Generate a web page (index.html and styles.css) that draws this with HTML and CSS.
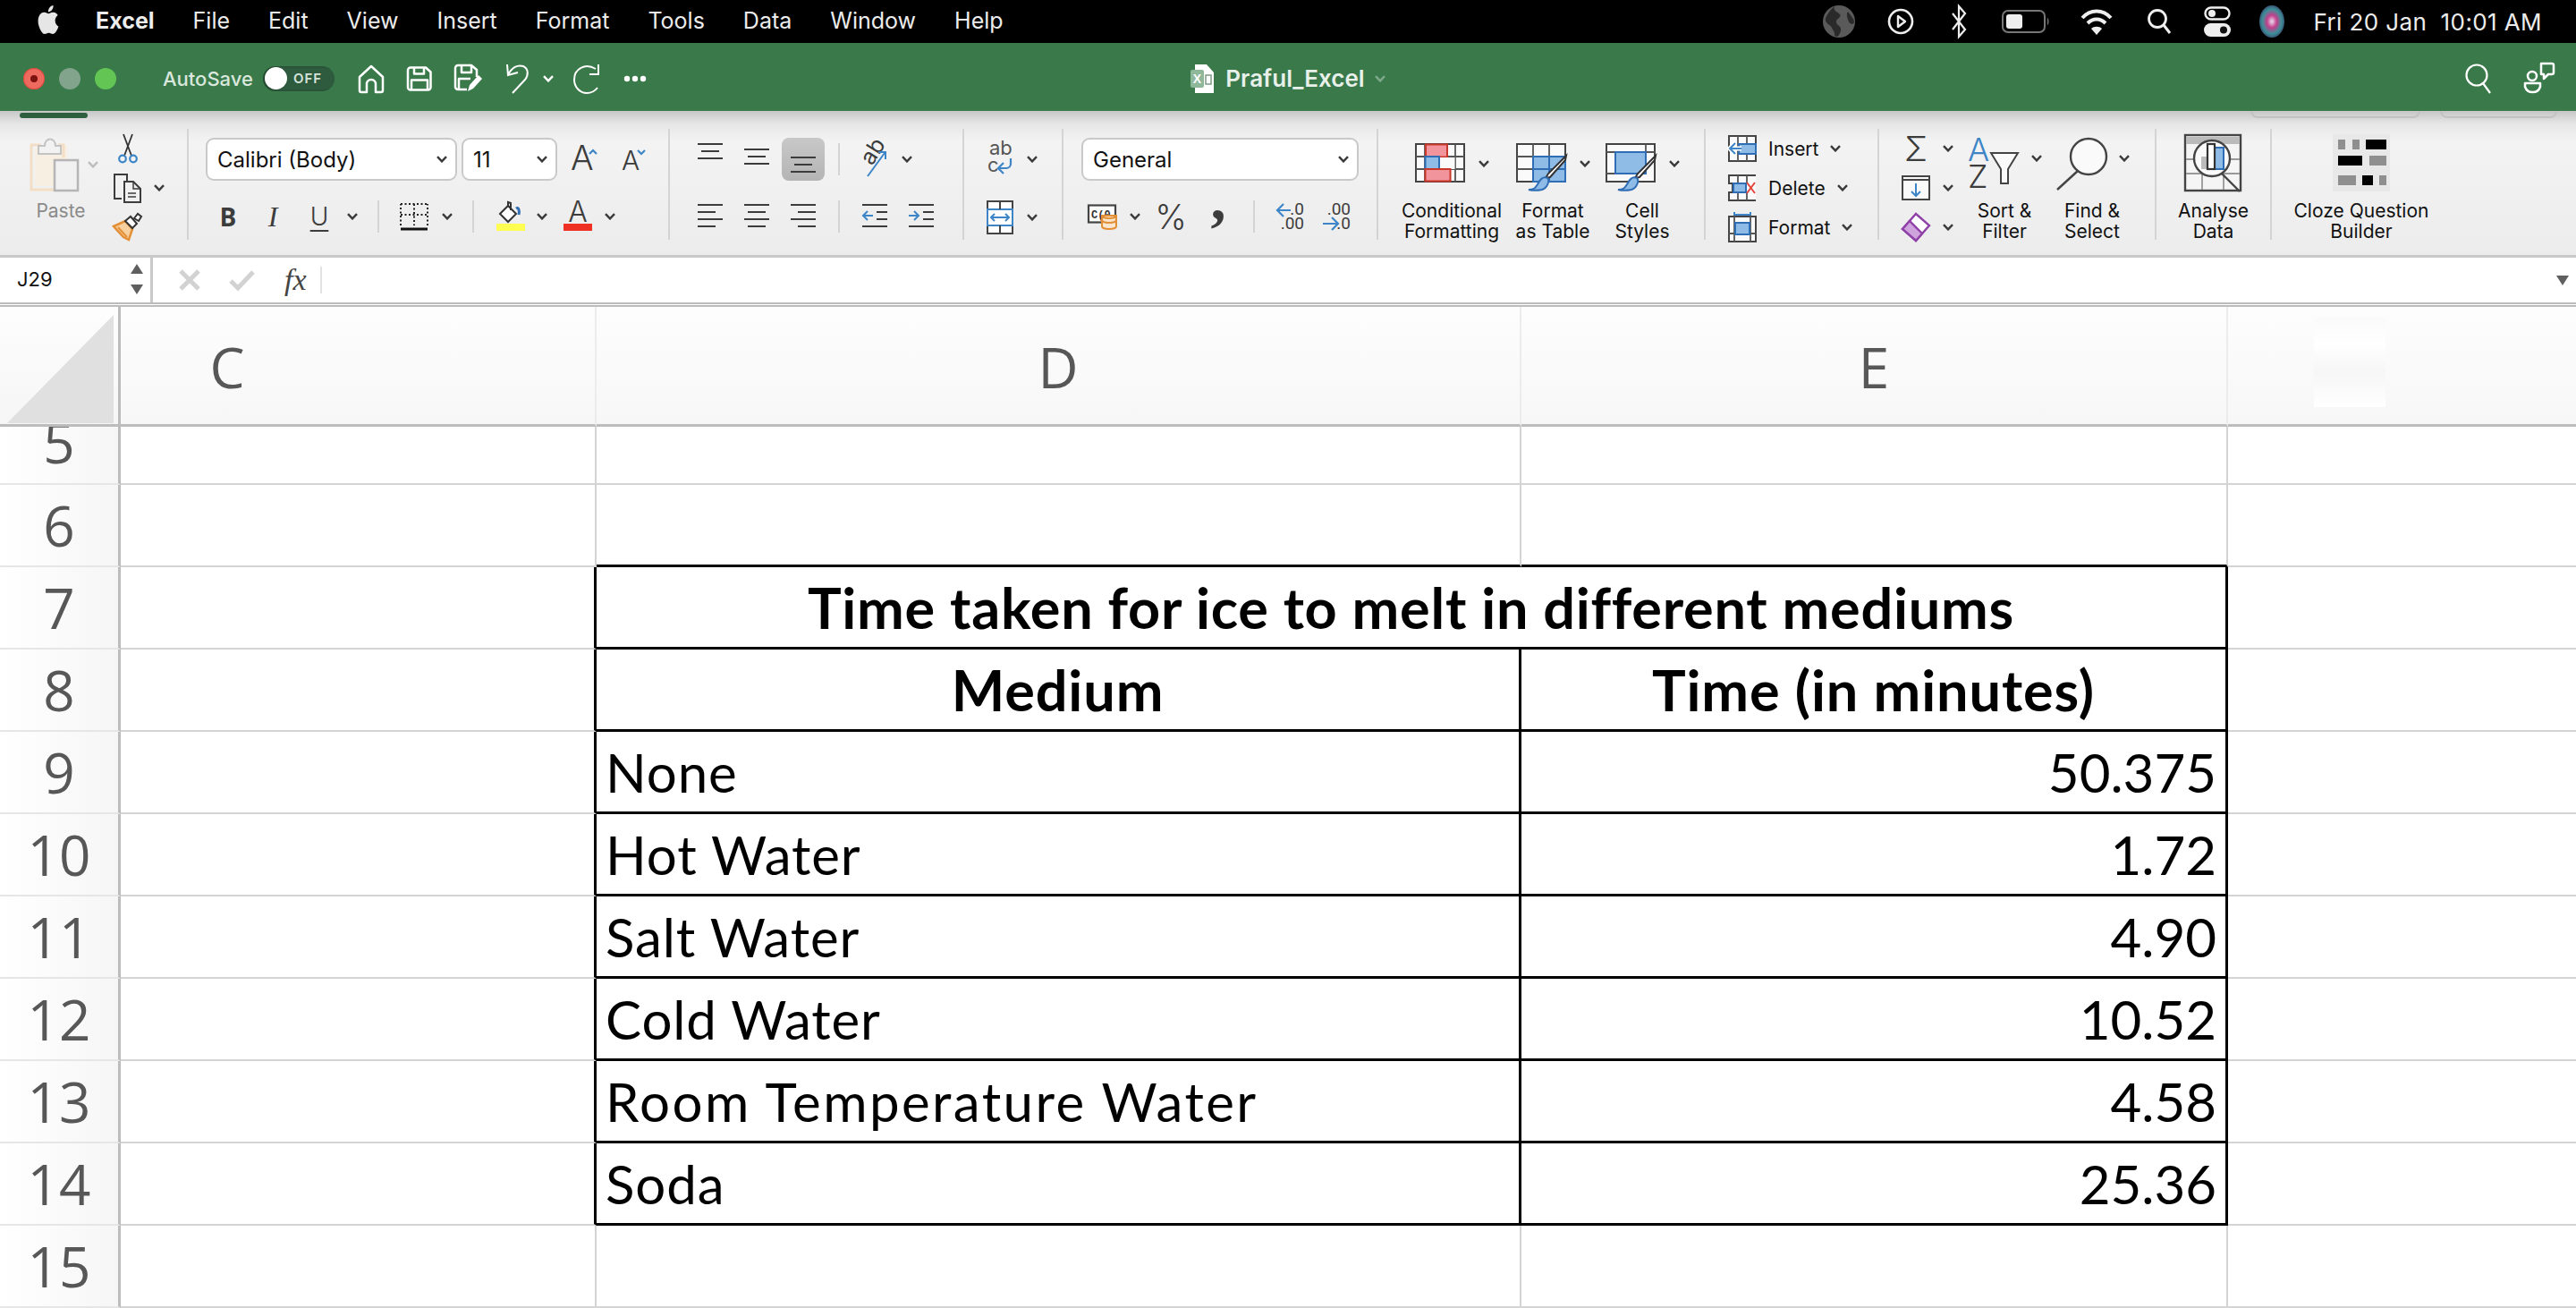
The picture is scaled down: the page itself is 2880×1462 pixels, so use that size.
FILE: index.html
```html
<!DOCTYPE html>
<html lang="en">
<head>
<meta charset="utf-8">
<title>Praful_Excel</title>
<link rel="stylesheet" href="styles.css">
</head>
<body>
<svg class="defs" width="0" height="0">
  <symbol id="chev" viewBox="0 0 12 8"><path d="M1 1.2 6 6.4 11 1.2" fill="none" stroke="currentColor" stroke-width="2.4"/></symbol>
</svg>

<header class="menubar">
  <svg class="apple" viewBox="0 0 24 24" width="28" height="32" preserveAspectRatio="none"><path fill="#e6e6e6" d="M12.152 6.896c-.948 0-2.415-1.078-3.96-1.04-2.04.027-3.91 1.183-4.961 3.014-2.117 3.675-.546 9.103 1.519 12.09 1.013 1.454 2.208 3.09 3.792 3.039 1.52-.065 2.09-.987 3.935-.987 1.831 0 2.35.987 3.96.948 1.637-.026 2.676-1.48 3.676-2.948 1.156-1.688 1.636-3.325 1.662-3.415-.039-.013-3.182-1.221-3.22-4.857-.026-3.04 2.48-4.494 2.597-4.559-1.429-2.09-3.623-2.324-4.39-2.376-2-.156-3.675 1.09-4.61 1.09zM15.53 3.83c.843-1.012 1.4-2.427 1.245-3.83-1.207.052-2.662.805-3.532 1.818-.78.896-1.454 2.338-1.273 3.714 1.338.104 2.715-.688 3.559-1.701"/></svg>
  <nav class="menus">
    <span class="menu-app">Excel</span><span>File</span><span>Edit</span><span>View</span><span>Insert</span><span>Format</span><span>Tools</span><span>Data</span><span>Window</span><span>Help</span>
  </nav>
  <div class="status">
    <svg width="38" height="38" viewBox="0 0 38 38"><circle cx="19" cy="19" r="18" fill="#5a5a5a"/><path d="M14 2c-2 5 3 6 6 9s-5 5-4 9 6 4 5 9-3 6-4 7l-3-1c1-4-2-6-3-9s-6-4-7-8 6-13 10-16zM29 8c2 3 7 8 7 12-2 4-6 1-7-3s-2-6 0-9z" fill="#2a2a2a"/></svg>
    <svg width="30" height="30" viewBox="0 0 30 30"><circle cx="15" cy="15" r="13" fill="none" stroke="#eee" stroke-width="2.6"/><path d="M12 9l8 6-8 6z" fill="none" stroke="#eee" stroke-width="2.4" stroke-linejoin="round"/></svg>
    <svg width="20" height="38" viewBox="0 0 20 38"><path d="M3 10l14 18-7 8V2l7 8L3 28" fill="none" stroke="#eee" stroke-width="2.2"/></svg>
    <svg width="54" height="26" viewBox="0 0 54 26"><rect x="1" y="1" width="47" height="24" rx="6" fill="none" stroke="#777" stroke-width="2"/><rect x="5" y="5" width="18" height="16" rx="3" fill="#eee"/><path d="M51 9c2 1 2 7 0 8z" fill="#777"/></svg>
    <svg width="36" height="30" viewBox="0 0 36 30"><path d="M2 11c9-10 23-10 32 0M8 17c6-6 14-6 20 0M13 22" fill="none" stroke="#eee" stroke-width="4"/><path d="M18 30l-6-7c3-3 9-3 12 0z" fill="#eee"/></svg>
    <svg width="28" height="30" viewBox="0 0 28 30"><circle cx="12" cy="12" r="9.5" fill="none" stroke="#eee" stroke-width="2.8"/><path d="M19 19l7 9" stroke="#eee" stroke-width="3"/></svg>
    <svg width="30" height="34" viewBox="0 0 30 34"><rect x="1.5" y="1.5" width="27" height="13" rx="6.5" fill="none" stroke="#eee" stroke-width="2.4"/><circle cx="9" cy="8" r="4" fill="#eee"/><rect x="0" y="19" width="30" height="15" rx="7.5" fill="#eee"/><circle cx="22" cy="26.500" r="4" fill="#111"/></svg>
    <svg width="28" height="36" viewBox="0 0 28 36"><defs><radialGradient id="siri" cx="50%" cy="50%" r="55%"><stop offset="0" stop-color="#e9e0f2"/><stop offset=".35" stop-color="#c43f8c"/><stop offset=".7" stop-color="#3b8f97"/><stop offset="1" stop-color="#3a3f6b"/></radialGradient></defs><ellipse cx="14" cy="18" rx="14" ry="18" fill="url(#siri)"/></svg>
    <span class="clock">Fri 20 Jan&nbsp; 10:01 AM</span>
  </div>
</header>

<section class="titlebar">
  <div class="tb-left">
    <div class="lights"><i class="light red"><b></b></i><i class="light gray"></i><i class="light green"></i></div>
    <span class="autosave">AutoSave</span>
    <span class="toggle"><i></i><em>OFF</em></span>
    <div class="qat">
      <svg width="30" height="32" viewBox="0 0 30 32"><path class="w" d="M2 14 15 2l13 12v15a2 2 0 0 1-2 2h-6V22a5 5 0 0 0-10 0v9H4a2 2 0 0 1-2-2z"/></svg>
      <svg width="28" height="28" viewBox="0 0 28 28"><path class="w" d="M4 1.500h17l5.500 5v17a3 3 0 0 1-3 3H4a3 3 0 0 1-3-3v-19a3 3 0 0 1 3-3zM8 1.500v7h11v-7M5 26.500v-11h18v11"/></svg>
      <svg width="32" height="32" viewBox="0 0 32 32"><path class="w" d="M14 28H4a3 3 0 0 1-3-3V4a3 3 0 0 1 3-3h15l6 5v8M8 1v8h11V1M5 28V16h13"/><path d="M15 30l2-7 10-11 4 4-10 11z" fill="#fff"/></svg>
      <svg width="28" height="34" viewBox="0 0 28 34"><path class="w2" d="M2 1l1 12 11-3M3 13C7 4 14 1 20 3c6 3 6 10 2 15L8 33"/></svg>
      <svg class="chev white" width="12" height="8"><use href="#chev"/></svg>
      <svg width="34" height="34" viewBox="0 0 34 34"><path class="w2" d="M26 6C14-1 2 6 2 18c0 8 6 15 14 15 5 0 9-2 12-6M29 1v11H19"/></svg>
      <svg width="26" height="8" viewBox="0 0 26 8"><circle cx="4" cy="4" r="3.200" fill="#fff"/><circle cx="13" cy="4" r="3.200" fill="#fff"/><circle cx="22" cy="4" r="3.200" fill="#fff"/></svg>
    </div>
  </div>
  <div class="tb-center">
    <svg width="28" height="32" viewBox="0 0 28 32"><path d="M5 0h13l8 9v23H5z" fill="#fff"/><rect x="0" y="6" width="15" height="20" rx="2" fill="#8fb79a"/><text class="doc-x" x="7.500" y="21">X</text><path d="M17 12h6v10h-6z" fill="none" stroke="#7d9c86" stroke-width="1.500"/></svg>
    <span class="docname">Praful_Excel</span>
    <svg class="chev faded" width="12" height="8"><use href="#chev"/></svg>
  </div>
  <div class="tb-right">
    <svg width="30" height="34" viewBox="0 0 30 34"><circle cx="13" cy="13" r="11.500" fill="none" stroke="#fff" stroke-width="2.200"/><path d="M20 22l8 11" stroke="#fff" stroke-width="2.200"/></svg>
    <svg width="34" height="38" viewBox="0 0 34 38"><path class="w" d="M19 2h12a2 2 0 0 1 2 2v8a2 2 0 0 1-2 2h-4l-5 5v-5h-3z"/><circle cx="9" cy="16" r="5" class="w"/><path class="w" d="M1 24h17v4a9 9 0 0 1-17 0z"/></svg>
  </div>
  <i class="pill"></i>
  <i class="tabedge a"></i><i class="tabedge b"></i>
</section>

<section class="ribbon">
  <div class="group g-paste">
    <div class="paste-col">
      <div class="paste-top">
        <svg width="54" height="60" viewBox="0 0 54 60"><path d="M12 8H1v50h26" fill="none" stroke="#f3ddc5" stroke-width="3"/><path d="M5 12v42h22V24h14V8h-3" fill="#f8efe3"/><path d="M31 8h6v14" fill="none" stroke="#f3ddc5" stroke-width="3"/><path d="M9 18V9h7c0-10 12-10 12 0h6v9z" fill="#f2f2f2" stroke="#c4c4c4" stroke-width="2"/><rect x="27" y="25" width="26" height="34" fill="#f1f1f1" stroke="#b5b5b5" stroke-width="2.500"/></svg>
        <svg class="chev dim" width="12" height="8"><use href="#chev"/></svg>
      </div>
      <span class="paste-label">Paste</span>
    </div>
    <div class="clip-col">
      <svg class="scissors" width="22" height="34" viewBox="0 0 22 34"><path d="M7 25 16 1M15 25 6 1" stroke="#333" stroke-width="1.800" fill="none"/><circle cx="5" cy="28.500" r="3.800" fill="none" stroke="#3d85c6" stroke-width="2.200"/><circle cx="17" cy="28.500" r="3.800" fill="none" stroke="#3d85c6" stroke-width="2.200"/></svg>
      <div class="copy-row">
        <svg width="34" height="34" viewBox="0 0 34 34"><path class="ln" d="M10 29H2V2h14v7"/><path class="ln" d="M13 10h10l8 8v15H13z"/><path d="M23 10v8h8M17 23h9M17 27h9" class="ln thin"/></svg>
        <svg class="chev" width="12" height="8"><use href="#chev"/></svg>
      </div>
      <svg width="34" height="32" viewBox="0 0 34 32"><path d="M1 16 14 10l8 9-4 12-6-3z" fill="#f8cf9e" stroke="#e28f36" stroke-width="2.500"/><path d="M6 17l10 11" stroke="#e28f36" stroke-width="2"/><path d="M14 10l6-5 7 8-5 5z" fill="#fff" stroke="#333" stroke-width="2"/><path d="M24 7l4-5 4 3-3 5z" fill="#fff" stroke="#333" stroke-width="2"/></svg>
    </div>
  </div>

  <div class="group g-font">
    <div class="row r-font1">
      <div class="select s-font">Calibri (Body)<svg class="chev" width="12" height="8"><use href="#chev"/></svg></div>
      <div class="select s-size">11<svg class="chev" width="12" height="8"><use href="#chev"/></svg></div>
      <svg width="32" height="30" viewBox="0 0 32 30"><text class="glyph ga-big" x="0" y="27">A</text><path d="M21 9l4-4 4 4" fill="none" stroke="#3d85c6" stroke-width="2.200"/></svg>
      <svg width="28" height="30" viewBox="0 0 28 30"><text class="glyph ga-small" x="0" y="27">A</text><path d="M18 5l4 4 4-4" fill="none" stroke="#3d85c6" stroke-width="2.200"/></svg>
    </div>
    <div class="row r-font2">
      <span class="tb tb-b">B</span>
      <span class="tb tb-i">I</span>
      <span class="tb tb-u">U</span>
      <svg class="chev" width="12" height="8"><use href="#chev"/></svg>
      <i class="vsep"></i>
      <svg width="32" height="32" viewBox="0 0 32 32"><path d="M1 2h30M1 14h30M1 26V2M31 26V2M16 2v24" stroke="#222" stroke-width="2" stroke-dasharray="2 2.500" fill="none"/><path d="M1 30h30" stroke="#111" stroke-width="3"/></svg>
      <svg class="chev" width="12" height="8"><use href="#chev"/></svg>
      <i class="vsep"></i>
      <svg class="fill-icon" width="34" height="34" viewBox="0 0 34 34"><path d="M5 14l9-9 9 9-9 9z" fill="#fff" stroke="#333" stroke-width="2"/><path d="M14 5V1l3 1v8" fill="none" stroke="#333" stroke-width="2"/><path d="M23 8c3-2 4 3 3 7" fill="none" stroke="#2f6db5" stroke-width="3"/><rect x="1" y="25" width="32" height="8" fill="#fdfd52"/></svg>
      <svg class="chev" width="12" height="8"><use href="#chev"/></svg>
      <svg width="34" height="34" viewBox="0 0 34 34"><text class="glyph ga-color" x="17" y="23">A</text><rect x="1" y="25" width="32" height="8" fill="#ee3124"/></svg>
      <svg class="chev" width="12" height="8"><use href="#chev"/></svg>
    </div>
  </div>

  <div class="group g-align">
    <div class="row r-align1">
      <svg width="28" height="36" viewBox="0 0 28 36"><path class="ln" d="M0 1h28M4 9h20M0 17h28"/></svg>
      <svg width="28" height="36" viewBox="0 0 28 36"><path class="ln" d="M0 7h28M4 15h20M0 23h28"/></svg>
      <span class="hl"><svg width="28" height="20" viewBox="0 0 28 20"><path class="ln" d="M0 1h28M4 9h20M0 17h28"/></svg></span>
      <i class="vsep"></i>
      <svg width="30" height="36" viewBox="0 0 30 36"><text class="orient" transform="translate(13 26) rotate(-58)" x="0" y="0">ab</text><path d="M8 37 27 11M20 10h8v8" fill="none" stroke="#3d85c6" stroke-width="2"/></svg>
      <svg class="chev" width="12" height="8"><use href="#chev"/></svg>
    </div>
    <div class="row r-align2">
      <svg width="28" height="28" viewBox="0 0 28 28"><path class="ln" d="M0 1h28M0 9h20M0 17h28M0 25h20"/></svg>
      <svg width="28" height="28" viewBox="0 0 28 28"><path class="ln" d="M0 1h28M4 9h20M0 17h28M4 25h20"/></svg>
      <svg width="28" height="28" viewBox="0 0 28 28"><path class="ln" d="M0 1h28M8 9h20M0 17h28M8 25h20"/></svg>
      <i class="vsep"></i>
      <svg width="28" height="28" viewBox="0 0 28 28"><path class="ln" d="M0 1h28M16 9h12M16 17h12M0 25h28"/><path d="M12 13H1M6 8l-5 5 5 5" fill="none" stroke="#3d85c6" stroke-width="2"/></svg>
      <svg width="28" height="28" viewBox="0 0 28 28"><path class="ln" d="M0 1h28M16 9h12M16 17h12M0 25h28"/><path d="M0 13h11M6 8l5 5-5 5" fill="none" stroke="#3d85c6" stroke-width="2"/></svg>
    </div>
  </div>

  <div class="group g-wrap">
    <div class="row r-wrap">
      <svg width="30" height="40" viewBox="0 0 30 40"><text class="wraptx" x="3" y="15">ab</text><text class="wraptx" x="1" y="34">c</text><path d="M27 19v6a5 5 0 0 1-5 5h-8M19 24l-6 6 6 6" fill="none" stroke="#3d85c6" stroke-width="2.200"/></svg>
      <svg class="chev" width="12" height="8"><use href="#chev"/></svg>
    </div>
    <div class="row r-wrap">
      <svg width="30" height="38" viewBox="0 0 30 38"><rect x="1" y="1" width="28" height="36" fill="#fff" stroke="#444" stroke-width="2"/><rect x="1" y="10" width="28" height="18" fill="#fff" stroke="#3d85c6" stroke-width="2"/><path d="M15 1v9M15 28v9" stroke="#444" stroke-width="2"/><path d="M5 19h20M9 15l-4 4 4 4M21 15l4 4-4 4" fill="none" stroke="#3d85c6" stroke-width="2"/></svg>
      <svg class="chev" width="12" height="8"><use href="#chev"/></svg>
    </div>
  </div>

  <div class="group g-num">
    <div class="row r-num1">
      <div class="select s-num">General<svg class="chev" width="12" height="8"><use href="#chev"/></svg></div>
    </div>
    <div class="row r-num2">
      <svg width="34" height="28" viewBox="0 0 34 28"><rect x="1" y="1.500" width="30" height="19" fill="#fff" stroke="#444" stroke-width="2.200"/><text class="acc" x="4" y="16">C(0</text><path d="M16 13h16v12a8 3 0 0 1-16 0z" fill="#fbe7cf" stroke="#e28f36" stroke-width="2"/><path d="M16 18a8 3 0 0 0 16 0M16 13a8 3 0 0 0 16 0" fill="none" stroke="#e28f36" stroke-width="2"/></svg>
      <svg class="chev" width="12" height="8"><use href="#chev"/></svg>
      <span class="pct">%</span>
      <span class="comma">,</span>
      <i class="vsep"></i>
      <svg width="32" height="34" viewBox="0 0 32 34"><path d="M17 10H2M9 3 2 10l7 7" fill="none" stroke="#3d85c6" stroke-width="2.200"/><text class="dec" x="32" y="15" text-anchor="end">.0</text><text class="dec" x="32" y="31" text-anchor="end">.00</text></svg>
      <svg width="32" height="34" viewBox="0 0 32 34"><text class="dec" x="32" y="15" text-anchor="end">.00</text><text class="dec" x="32" y="31" text-anchor="end">.0</text><path d="M1 25h17M11 18l7 7-7 7" fill="none" stroke="#3d85c6" stroke-width="2.200"/></svg>
    </div>
  </div>

  <div class="group g-styles">
    <div class="big">
      <div class="big-top">
        <svg width="56" height="44" viewBox="0 0 56 44"><rect x="1" y="1" width="54" height="42" fill="#fafafa" stroke="#444" stroke-width="2"/><path d="M1 15h54M1 29h54M11 1v42M36 1v42M45 1v42" stroke="#555" stroke-width="1.800"/><rect x="12" y="1.500" width="24" height="14" fill="#f2949b" stroke="#c9362a" stroke-width="2"/><rect x="27.500" y="16" width="17" height="13" fill="#fafafa"/><rect x="11.500" y="15" width="15.500" height="14" fill="#8fbce6" stroke="#2f6db5" stroke-width="2"/><rect x="11.500" y="29" width="28" height="13.500" fill="#f2949b" stroke="#c9362a" stroke-width="2"/></svg>
        <svg class="chev" width="12" height="8"><use href="#chev"/></svg>
      </div>
      <span class="label">Conditional<br>Formatting</span>
    </div>
    <div class="big">
      <div class="big-top">
        <svg width="56" height="54" viewBox="0 0 56 54"><rect x="1" y="1" width="54" height="42" fill="#fafafa" stroke="#444" stroke-width="2"/><path d="M1 15h54M1 29h54M19 1v42M37 1v42" stroke="#555" stroke-width="1.800"/><rect x="19" y="15" width="36" height="28" fill="#8fbce6" stroke="#2f6db5" stroke-width="2"/><path d="M19 29h36M37 15v28" stroke="#2f6db5" stroke-width="2"/><path d="M56 14 36 34l-3 5 5-1 17-19z" fill="#fff" stroke="#333" stroke-width="2"/><path d="M14 52c7 0 8-3 10-6 2-4 6-10 11-7 3 3 0 11-6 13-5 1-11 1-15 0z" fill="#8fbce6" stroke="#2f6db5" stroke-width="2"/></svg>
        <svg class="chev" width="12" height="8"><use href="#chev"/></svg>
      </div>
      <span class="label">Format<br>as Table</span>
    </div>
    <div class="big">
      <div class="big-top">
        <svg width="56" height="54" viewBox="0 0 56 54"><rect x="1" y="1" width="54" height="42" fill="#fafafa" stroke="#444" stroke-width="2"/><path d="M1 10h10M45 10h10M1 34h10M45 1v10" stroke="#555" stroke-width="1.800"/><rect x="11" y="10" width="34" height="24" fill="#8fbce6" stroke="#2f6db5" stroke-width="2"/><path d="M56 14 36 34l-3 5 5-1 17-19z" fill="#fff" stroke="#333" stroke-width="2"/><path d="M14 52c7 0 8-3 10-6 2-4 6-10 11-7 3 3 0 11-6 13-5 1-11 1-15 0z" fill="#8fbce6" stroke="#2f6db5" stroke-width="2"/></svg>
        <svg class="chev" width="12" height="8"><use href="#chev"/></svg>
      </div>
      <span class="label">Cell<br>Styles</span>
    </div>
  </div>

  <div class="group g-cells">
    <div class="cellrow">
      <svg width="32" height="30" viewBox="0 0 32 30"><rect x="1" y="1" width="30" height="28" fill="#fafafa" stroke="#444" stroke-width="2"/><path d="M11 1v28M21 1v28" stroke="#555" stroke-width="1.800"/><rect x="12" y="10" width="19" height="11" fill="#8fbce6" stroke="#2f6db5" stroke-width="2"/><path d="M15 15H2M8 8l-6 7 6 7" fill="none" stroke="#fff" stroke-width="5"/><path d="M15 15H2M8 9l-6 6 6 6" fill="none" stroke="#3d85c6" stroke-width="2"/></svg>
      <span class="label">Insert</span><svg class="chev" width="12" height="8"><use href="#chev"/></svg>
    </div>
    <div class="cellrow">
      <svg width="32" height="30" viewBox="0 0 32 30"><path d="M31 1H1v9h4v10H1v9h30" fill="#fafafa" stroke="#444" stroke-width="2"/><path d="M11 1v9M21 1v9M11 20v9M21 20v9" stroke="#555" stroke-width="1.800"/><rect x="6" y="10" width="14" height="10" fill="#8fbce6" stroke="#2f6db5" stroke-width="2"/><path d="M21 9l9 12M30 9l-9 12" stroke="#e2443a" stroke-width="2"/></svg>
      <span class="label">Delete</span><svg class="chev" width="12" height="8"><use href="#chev"/></svg>
    </div>
    <div class="cellrow">
      <svg width="32" height="34" viewBox="0 0 32 34"><path d="M7 3h18M7 0v6M25 0v6" stroke="#3d85c6" stroke-width="2"/><rect x="1" y="5" width="30" height="28" fill="#fafafa" stroke="#444" stroke-width="2"/><path d="M7 5v28M25 5v28M1 24h30" stroke="#555" stroke-width="1.800"/><rect x="8" y="12" width="16" height="13" fill="#8fbce6" stroke="#2f6db5" stroke-width="2"/></svg>
      <span class="label">Format</span><svg class="chev" width="12" height="8"><use href="#chev"/></svg>
    </div>
  </div>

  <div class="group g-edit">
    <div class="edit-col">
      <div class="editrow">
        <span class="sigma">&Sigma;</span>
        <svg class="chev" width="12" height="8"><use href="#chev"/></svg>
      </div>
      <div class="editrow">
        <svg width="32" height="28" viewBox="0 0 32 28"><rect x="1" y="1" width="30" height="26" fill="#fafafa" stroke="#444" stroke-width="2"/><path d="M1 5h30" stroke="#444" stroke-width="2"/><path d="M16 9v14M11 18l5 5 5-5" fill="none" stroke="#3d85c6" stroke-width="2"/></svg>
        <svg class="chev" width="12" height="8"><use href="#chev"/></svg>
      </div>
      <div class="editrow">
        <svg width="32" height="32" viewBox="0 0 32 32"><path d="M16 1 31 14 16 31 1 18z" fill="#fff" stroke="#8f41a8" stroke-width="2.400"/><path d="M1 18 9 9l14 14-7 8z" fill="#cfa3dd" stroke="#8f41a8" stroke-width="2.400"/></svg>
        <svg class="chev" width="12" height="8"><use href="#chev"/></svg>
      </div>
    </div>
    <div class="big">
      <div class="big-top sort-top">
        <svg width="58" height="60" viewBox="0 0 58 60"><text class="az blue" x="0" y="27">A</text><text class="az" x="0" y="57">Z</text><path d="M26 18h30L45 36v16h-8V36z" fill="#fafafa" stroke="#444" stroke-width="2"/></svg>
        <svg class="chev" width="12" height="8"><use href="#chev"/></svg>
      </div>
      <span class="label">Sort &amp;<br>Filter</span>
    </div>
    <div class="big">
      <div class="big-top sort-top">
        <svg width="58" height="60" viewBox="0 0 58 60"><ellipse cx="37" cy="22" rx="20" ry="20" fill="#fafafa" stroke="#444" stroke-width="2.400"/><path d="M25 38 2 59" stroke="#444" stroke-width="2.400"/></svg>
        <svg class="chev" width="12" height="8"><use href="#chev"/></svg>
      </div>
      <span class="label">Find &amp;<br>Select</span>
    </div>
  </div>

  <div class="group g-analyse">
    <div class="big">
      <div class="big-top tall">
        <svg width="64" height="64" viewBox="0 0 64 64"><rect x="1" y="1" width="62" height="62" fill="#f5f5f5" stroke="#444" stroke-width="2.400"/><rect x="2" y="3" width="60" height="8" fill="#bbb"/><path d="M2 28h60M2 44h60M20 44v18M44 44v18" stroke="#999" stroke-width="1.800"/><circle cx="31" cy="27" r="20" fill="#fafafa" stroke="#444" stroke-width="2.400"/><rect x="19" y="25" width="10" height="14" fill="#bbb"/><rect x="34" y="15" width="10" height="24" fill="#8fbce6" stroke="#2f6db5" stroke-width="2"/><rect x="26" y="11" width="8" height="28" fill="#fff" stroke="#333" stroke-width="2.200"/><path d="M42 44 62 64" stroke="#444" stroke-width="2.400"/></svg>
      </div>
      <span class="label">Analyse<br>Data</span>
    </div>
  </div>

  <div class="group g-cloze">
    <div class="big">
      <div class="big-top tall">
        <svg width="64" height="64" viewBox="0 0 64 64"><rect width="64" height="64" fill="#e8e8e8"/><g fill="#8f8f8f"><rect x="6" y="6" width="8" height="11"/><rect x="22" y="6" width="8" height="11"/><rect x="41" y="24" width="19" height="11"/><rect x="6" y="46" width="20" height="11"/><rect x="52" y="46" width="8" height="11"/></g><g fill="#000"><rect x="37" y="6" width="23" height="11"/><rect x="6" y="24" width="27" height="11"/><rect x="33" y="46" width="12" height="11"/></g></svg>
      </div>
      <span class="label">Cloze Question<br>Builder</span>
    </div>
  </div>
</section>

<section class="formula">
  <div class="namebox">
    <span>J29</span>
    <div class="stepper"><i class="tri up"></i><i class="tri down"></i></div>
  </div>
  <div class="fx-tools">
    <svg width="24" height="24" viewBox="0 0 24 24"><path d="M2 2l20 20M22 2 2 22" stroke="#d2d2d2" stroke-width="5"/></svg>
    <svg width="30" height="24" viewBox="0 0 30 24"><path d="M2 13l8 8L27 3" fill="none" stroke="#d2d2d2" stroke-width="5"/></svg>
    <span class="fx">fx</span>
    <i class="fx-sep"></i>
  </div>
  <div class="fx-input"></div>
  <i class="tri down big-tri"></i>
</section>

<main class="sheet">
  <div class="corner"><svg width="120" height="121" viewBox="0 0 120 121"><path d="M0 121 119 0v121z" fill="#e0e0e0"/></svg></div>
  <div class="colhead col-c">C</div>
  <div class="colhead">D</div>
  <div class="colhead">E</div>
  <div class="colhead-rest"><i class="ghost"></i></div>

  <div class="rowhead rowhead-cut"><span>5</span></div><div class="cell"></div><div class="cell"></div><div class="cell"></div><div class="cell rest"></div>
  <div class="rowhead"><span>6</span></div><div class="cell"></div><div class="cell edge-b"></div><div class="cell edge-b"></div><div class="cell rest"></div>

  <div class="rowhead"><span>7</span></div><div class="cell edge-r"></div><div class="cell tcell title">Time taken for ice to melt in different mediums</div><div class="cell rest"></div>
  <div class="rowhead"><span>8</span></div><div class="cell edge-r"></div><div class="cell tcell head">Medium</div><div class="cell tcell head">Time (in minutes)</div><div class="cell rest"></div>
  <div class="rowhead"><span>9</span></div><div class="cell edge-r"></div><div class="cell tcell">None</div><div class="cell tcell num">50.375</div><div class="cell rest"></div>
  <div class="rowhead"><span>10</span></div><div class="cell edge-r"></div><div class="cell tcell">Hot Water</div><div class="cell tcell num">1.72</div><div class="cell rest"></div>
  <div class="rowhead"><span>11</span></div><div class="cell edge-r"></div><div class="cell tcell">Salt Water</div><div class="cell tcell num">4.90</div><div class="cell rest"></div>
  <div class="rowhead"><span>12</span></div><div class="cell edge-r"></div><div class="cell tcell">Cold Water</div><div class="cell tcell num">10.52</div><div class="cell rest"></div>
  <div class="rowhead"><span>13</span></div><div class="cell edge-r"></div><div class="cell tcell room">Room Temperature Water</div><div class="cell tcell num">4.58</div><div class="cell rest"></div>
  <div class="rowhead"><span>14</span></div><div class="cell edge-r"></div><div class="cell tcell">Soda</div><div class="cell tcell num">25.36</div><div class="cell rest"></div>
  <div class="rowhead"><span>15</span></div><div class="cell"></div><div class="cell"></div><div class="cell"></div><div class="cell rest"></div>
</main>
</body>
</html>
```

FILE: styles.css
```css
* { box-sizing: border-box; }
html, body { margin: 0; width: 2880px; height: 1462px; overflow: hidden; background: #fff; }
body { font-family: Inter, "Liberation Sans", sans-serif; color: #111; }
svg { display: block; flex: none; overflow: visible; }
i, em { font-style: normal; }
.defs { position: absolute; }
.chev { color: #3a3a3a; width: 12px; height: 8px; }
.chev.white { color: #fff; }
.chev.faded { color: #7fa98b; }
.chev.dim { color: #bdbdbd; }
.ln { fill: none; stroke: #3c3c3c; stroke-width: 2; }
.ln.thin { stroke-width: 1.5; }
.w { fill: none; stroke: #fff; stroke-width: 2.5; stroke-linejoin: round; }
.w2 { fill: none; stroke: #fff; stroke-width: 2; }

/* macOS menu bar */
.menubar { height: 48px; background: #000; color: #ececec; display: flex; align-items: center; padding-left: 40px; font-size: 25px; }
.apple { margin-top: -4px; }
.menus { display: flex; gap: 43px; margin-left: 39px; margin-top: -2px; }
.menu-app { font-weight: 700; }
.status { margin-left: auto; display: grid; grid-template-columns: 73px 70px 58px 88px 74px 64px 62px 60px auto; align-items: center; padding-right: 38px; }
.clock { font-size: 26px; letter-spacing: .4px; white-space: nowrap; }

/* window title bar */
.titlebar { height: 76px; padding-top: 3px; background: #3a7a4a; display: grid; grid-template-columns: 1fr auto 1fr; align-items: center; position: relative; }
.tb-left { display: flex; align-items: center; padding-left: 26px; }
.lights { display: flex; gap: 16px; }
.light { width: 24px; height: 24px; border-radius: 50%; display: flex; align-items: center; justify-content: center; }
.light.red { background: #ef6a5e; box-shadow: inset 0 0 0 1px #d5483c; }
.light.red b { width: 8px; height: 8px; border-radius: 50%; background: #7c1310; }
.light.gray { background: #82a48c; }
.light.green { background: #62c554; }
.autosave { margin-left: 52px; width: 112px; font-size: 22px; font-weight: 500; color: #d9e7dd; }
.toggle { width: 80px; height: 28px; border-radius: 14px; background: #2e5a3e; display: flex; align-items: center; padding-left: 2px; box-shadow: inset 2px 0 3px rgba(0,0,0,.25); }
.toggle i { width: 25px; height: 25px; border-radius: 50%; background: #fff; }
.toggle em { margin-left: 7px; font-size: 15px; font-weight: 600; letter-spacing: 1px; color: #d5e3da; }
.qat { margin-left: 26px; display: grid; grid-template-columns: 55px 53px 57px 42px 33px 57px auto; align-items: center; }
.tb-center { display: flex; align-items: center; gap: 11px; }
.docname { font-size: 26px; font-weight: 600; color: #e8f0ea; }
.doc-x { font: 700 14px "Liberation Sans", sans-serif; fill: #fff; text-anchor: middle; }
.tb-right { display: flex; justify-content: flex-end; align-items: center; gap: 36px; padding-right: 24px; }
.pill { position: absolute; left: 22px; bottom: -8px; width: 76px; height: 6px; border-radius: 3px; background: #2d5f3e; z-index: 2; }
.tabedge { position: absolute; bottom: -8px; height: 8px; border: 2px solid #c2c2c2; border-top: 0; border-radius: 0 0 8px 8px; z-index: 2; }
.tabedge.a { left: 2516px; width: 190px; }
.tabedge.b { left: 2728px; width: 131px; }

/* ribbon */
.ribbon { height: 161px; padding-top: 20px; display: flex; align-items: flex-start; background: linear-gradient(#c6c6c6 0, #e6e6e6 14px, #f3f3f3 34px, #ececec 161px); }
.group { height: 124px; border-right: 2px solid #d4d4d4; flex: none; }
.g-paste { width: 211px; display: flex; padding: 10px 0 0 34px; }
.paste-col { width: 92px; }
.paste-top { display: flex; align-items: center; gap: 10px; }
.paste-label { display: block; width: 68px; text-align: center; margin-top: 9px; font-size: 21px; color: #8a8a8a; }
.clip-col { margin-top: -5px; display: flex; flex-direction: column; gap: 10px; align-items: flex-start; }
.scissors { margin-left: 6px; }
.copy-row { display: flex; align-items: center; gap: 12px; }
.row { display: grid; align-items: center; justify-items: center; flex: none; }
.g-font, .g-align, .g-wrap, .g-num { padding-top: 10px; display: flex; flex-direction: column; gap: 22px; }
.g-font { width: 538px; padding-left: 19px; }
.r-font1 { height: 48px; grid-template-columns: 281px 107px 52px 46px; column-gap: 5px; justify-items: start; }
.r-font1 > svg { margin-left: 10px; }
.r-font2 { height: 36px; grid-template-columns: 50px 50px 54px 20px 38px 42px 32px 26px 54px 20px 60px 12px; }
.fill-icon { margin-left: 4px; }
.select { height: 48px; width: 100%; background: #fff; border: 2px solid #c9c9c9; border-radius: 9px; display: flex; align-items: center; justify-content: space-between; padding: 0 9px 0 11px; font-size: 24px; color: #111; }
.tb { font-family: "Open Sans", sans-serif; font-size: 28px; color: #3c3c3c; line-height: 36px; }
.tb-b { font-weight: 700; }
.tb-i { font-family: "Liberation Serif", serif; font-style: italic; font-size: 32px; }
.tb-u { text-decoration: underline; text-underline-offset: 5px; text-decoration-thickness: 2px; font-family: Inter, sans-serif; font-weight: 300; }
.vsep { width: 2px; height: 36px; background: #d4d4d4; }
.glyph { font-family: Inter, sans-serif; font-weight: 300; fill: #3c3c3c; }
.ga-big { font-size: 38px; }
.ga-small { font-size: 30px; }
.ga-color { font-size: 32px; text-anchor: middle; }
.g-align { width: 329px; padding-left: 19px; }
.r-align1 { height: 48px; grid-template-columns: 52px 52px 52px 28px 50px 24px; }
.r-align2 { height: 36px; grid-template-columns: 52px 52px 52px 28px 52px 52px; }
.hl { width: 48px; height: 48px; border-radius: 8px; background: linear-gradient(#c8c8c8, #b4b4b4); display: flex; align-items: flex-end; justify-content: center; padding-bottom: 7px; }
.orient { font: 400 25px Inter, sans-serif; fill: #3c3c3c; }
.g-wrap { width: 111px; padding-left: 10px; }
.r-wrap { grid-template-columns: 60px 12px; height: 36px; }
.r-wrap:first-child { height: 48px; }
.wraptx { font: 400 22px Inter, sans-serif; fill: #555; }
.g-num { width: 352px; padding-left: 20px; }
.r-num1 { height: 48px; width: 310px; grid-template-columns: 1fr; }
.r-num2 { height: 36px; grid-template-columns: 48px 24px 56px 50px 30px 50px 54px; width: 312px; }
.pct { font: 300 38px Inter, sans-serif; color: #3c3c3c; line-height: 36px; }
.comma { font: 700 68px "Liberation Serif", serif; color: #3c3c3c; line-height: 36px; margin-top: -40px; }
.acc { font: 700 12px "Liberation Mono", monospace; fill: #333; }
.dec { font: 400 19px Roboto, sans-serif; fill: #3c3c3c; }
.g-styles { width: 366px; padding: 16px 0 0 12px; display: grid; grid-template-columns: 140px 86px 114px; align-items: start; }
.big { display: flex; flex-direction: column; align-items: center; }
.big-top { height: 56px; display: flex; flex: none; align-items: flex-start; gap: 15px; width: 84px; justify-content: center; }
.big-top .chev { margin-top: 19px; }
.label { font-size: 21px; line-height: 23px; color: #111; text-align: center; white-space: nowrap; }
.g-styles .label { margin-top: 8px; }
.g-cells { width: 194px; padding-left: 25px; display: flex; flex-direction: column; }
.cellrow { height: 44px; flex: none; display: flex; align-items: center; gap: 13px; }
.g-edit { width: 310px; padding-left: 25px; display: grid; grid-template-columns: 65px 100px 96px; }
.edit-col { display: flex; flex-direction: column; }
.editrow { height: 44px; flex: none; display: grid; grid-template-columns: 32px 12px; column-gap: 14px; align-items: center; justify-items: center; }
.sigma { font: 300 38px Inter, sans-serif; color: #3c3c3c; line-height: 44px; }
.sort-top { height: 72px; width: auto; gap: 13px; padding-top: 9px; }
.sort-top .chev { margin-top: 20px; }
.g-edit .label { margin-top: 8px; }
.az { font: 300 36px Inter, sans-serif; fill: #3c3c3c; }
.az.blue { fill: #3d85c6; }
.g-analyse { width: 129px; display: flex; justify-content: center; padding-top: 6px; }
.g-cloze { width: 200px; border-right: 0; display: flex; justify-content: center; padding-top: 6px; }
.tall { height: 74px; width: auto; }

/* formula bar */
.formula { height: 58px; background: #fff; display: flex; align-items: stretch; border-top: 3px solid #c8c8c8; border-bottom: 5px double #bcbcbc; position: relative; }
.namebox { width: 171px; border-right: 3px solid #c8c8c8; display: flex; align-items: center; justify-content: space-between; padding: 0 8px 2px 19px; font-size: 22px; }
.stepper { display: flex; flex-direction: column; gap: 12px; }
.tri { display: block; width: 0; height: 0; border-left: 7px solid transparent; border-right: 7px solid transparent; }
.tri.up { border-bottom: 11px solid #5f5f5f; }
.tri.down { border-top: 11px solid #5f5f5f; }
.fx-tools { display: flex; align-items: center; padding-left: 29px; }
.fx-tools svg:nth-child(2) { margin-left: 32px; }
.fx { font: italic 34px "Liberation Serif", serif; color: #444; margin-left: 32px; }
.fx-sep { width: 2px; height: 30px; background: #e2e2e2; margin-left: 15px; }
.fx-input { flex: 1; }
.big-tri { align-self: center; margin-right: 8px; }

/* sheet */
.sheet { display: grid; grid-template-columns: 135px 532px 1034px 790px 389px; grid-template-rows: 134px 65px repeat(10, 92px); }
.corner { background: linear-gradient(#fdfdfd, #f6f6f6); border-right: 3px solid #bcbcbc; border-bottom: 3px solid #bcbcbc; padding: 9px 0 0 8px; }
.colhead, .colhead-rest { background: linear-gradient(#fdfdfd, #f7f7f7); border-bottom: 3px solid #bcbcbc; border-right: 2px solid #ececec; display: flex; align-items: center; justify-content: center; padding-top: 2px; font: 400 62px "Open Sans", sans-serif; color: #575757; }
.colhead-rest { border-right: 0; position: relative; }
.col-c { padding-right: 292px; }
.ghost { position: absolute; left: 96px; top: 12px; width: 80px; height: 100px; background: linear-gradient(#fafafa, #fff 30%, #f6f6f6 60%, #fff); }
.rowhead { background: linear-gradient(90deg, #fff, #f6f6f6); border-right: 3px solid #bcbcbc; border-bottom: 2px solid #e6e6e6; display: flex; align-items: center; justify-content: center; font: 400 62px "Open Sans", sans-serif; color: #575757; overflow: hidden; }
.rowhead-cut { align-items: flex-end; }
.rowhead span { line-height: 92px; height: 92px; flex: none; }
.cell { border-right: 2px solid #d4d4d4; border-bottom: 2px solid #d4d4d4; font: 400 60px Lato, sans-serif; color: #000; display: flex; align-items: center; padding: 0 10px; white-space: nowrap; letter-spacing: .9px; }
.cell.rest { border-right: 0; }
.cell.edge-b { border-bottom: 3px solid #000; }
.cell.edge-r { border-right: 3px solid #000; }
.tcell { border-right: 3px solid #000; border-bottom: 3px solid #000; }
.room { letter-spacing: 2.4px; }
.title { grid-column: span 2; justify-content: center; font-size: 63px; font-weight: 700; letter-spacing: .75px; }
.head { justify-content: center; font-size: 63px; font-weight: 700; letter-spacing: .9px; }
.num { justify-content: flex-end; letter-spacing: 0; }
```
